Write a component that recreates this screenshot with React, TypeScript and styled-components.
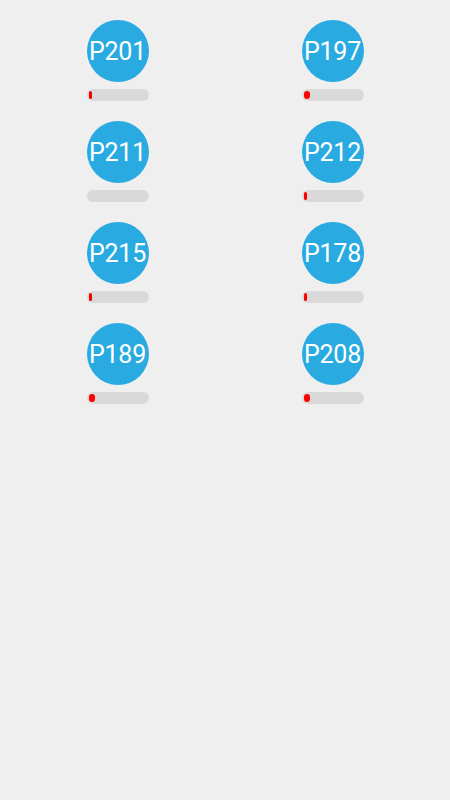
import styled, { createGlobalStyle } from 'styled-components';

const GlobalStyle = createGlobalStyle`
  html, body {
    background: #efefef;
  }
  body {
    margin: 8px;
    font-family: Roboto, "Noto Sans", sans-serif;
  }
`;

interface Station {
  id: string;
  level: number;
}

const STATIONS: Station[] = [
  { id: 'P201', level: 3 },
  { id: 'P197', level: 6 },
  { id: 'P211', level: 0 },
  { id: 'P212', level: 3 },
  { id: 'P215', level: 3 },
  { id: 'P178', level: 3 },
  { id: 'P189', level: 6 },
  { id: 'P208', level: 6 },
];

const Grid = styled.div`
  display: grid;
  grid-template-columns: repeat(2, 215px);
  row-gap: 20px;
  padding: 12px 0 0 2px;
`;

const Cell = styled.div`
  display: flex;
  flex-direction: column;
  align-items: center;
  gap: 7px;
`;

const Badge = styled.div`
  width: 62px;
  height: 62px;
  border-radius: 50%;
  background: #29abe2;
  color: #ffffff;
  display: flex;
  align-items: center;
  justify-content: center;
  font-size: 25px;
  letter-spacing: -0.2px;
`;

const Track = styled.div`
  width: 62px;
  height: 12px;
  box-sizing: border-box;
  padding: 2px;
  border-radius: 6px;
  background: #d9d9d9;
  display: flex;
`;

const Fill = styled.div<{ $empty: boolean }>`
  height: 100%;
  border-radius: 4px;
  background: ${(p) => (p.$empty ? 'transparent' : '#ff0000')};
`;

export default function App() {
  return (
    <>
      <GlobalStyle />
      <Grid>
        {STATIONS.map((s) => (
          <Cell key={s.id}>
            <Badge>{s.id}</Badge>
            <Track>
              <Fill $empty={s.level === 0} style={{ width: s.level }} />
            </Track>
          </Cell>
        ))}
      </Grid>
    </>
  );
}
